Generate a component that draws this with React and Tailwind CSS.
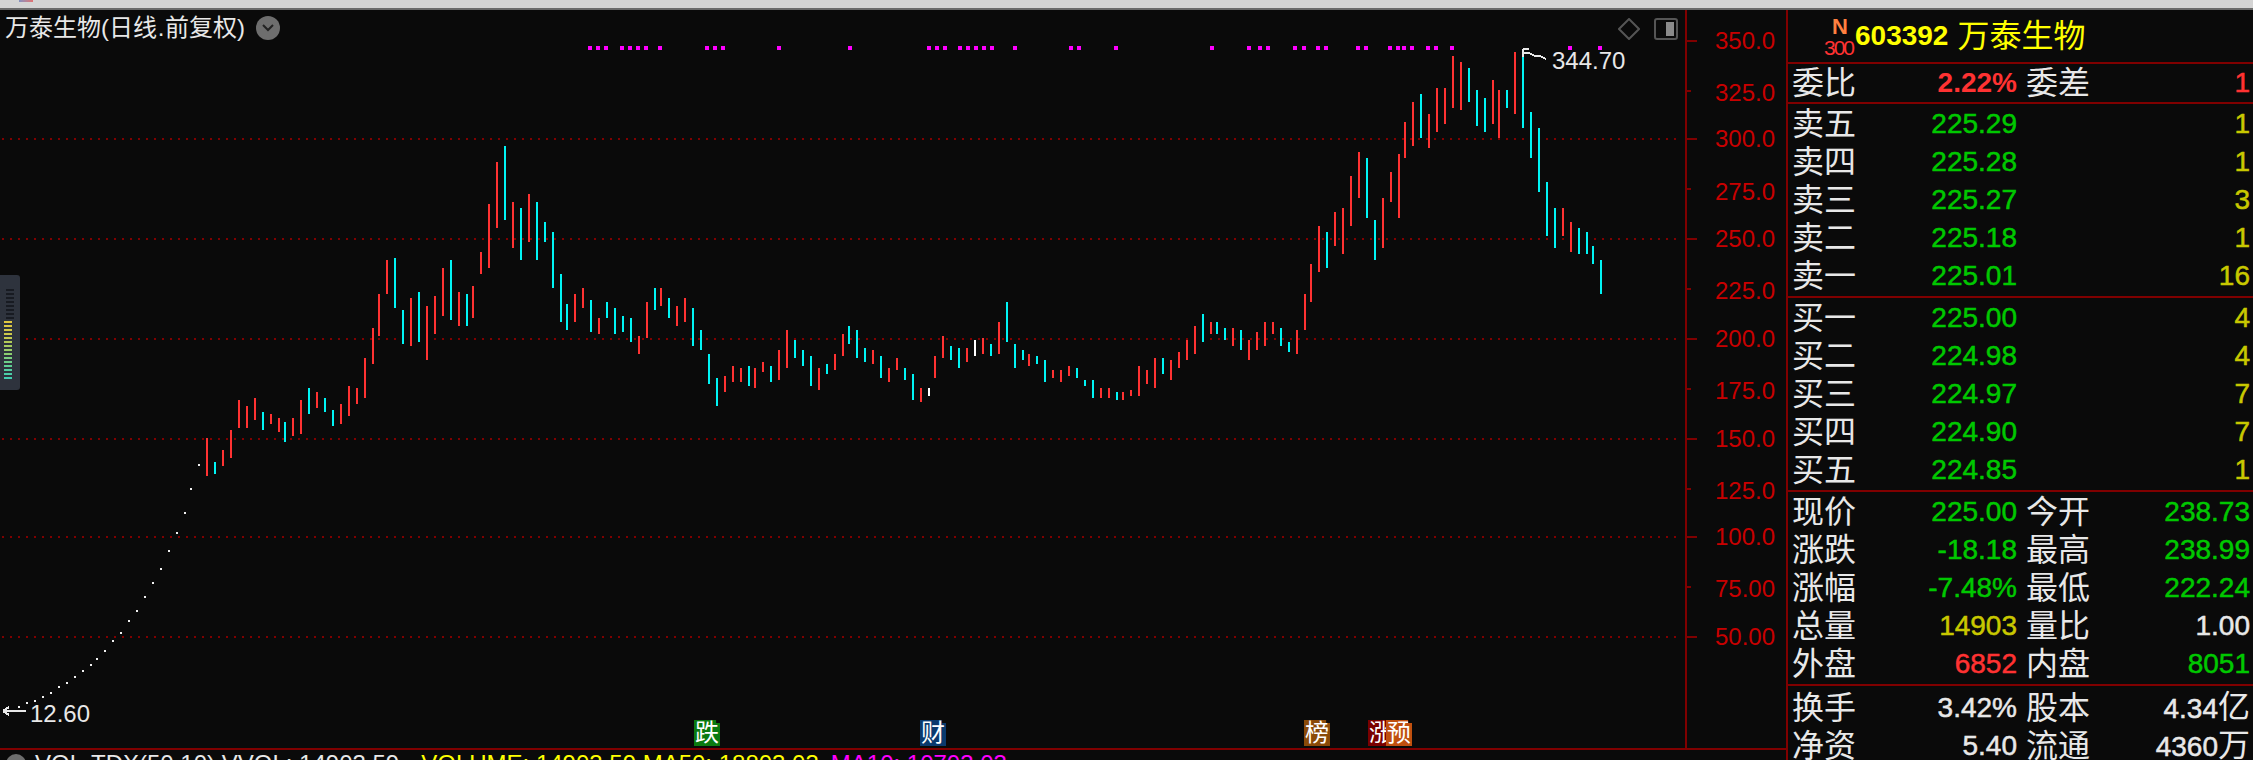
import React from "react";

const RED = "#ff3232";
const CYAN = "#00f4f4";
const WHITE = "#ffffff";
const COLORS = { r: RED, c: CYAN, w: WHITE };

// candles, read off the chart: [x, top, bottom, colour]
const BARS = [
  [207, 438, 476, "r"], [215, 462, 474, "c"], [223, 450, 466, "r"], [231, 430, 458, "r"], [239, 400, 428, "r"],
  [247, 406, 428, "r"], [255, 398, 420, "r"], [263, 412, 430, "c"], [271, 414, 424, "r"], [279, 418, 432, "r"],
  [285, 422, 442, "c"], [293, 418, 436, "r"], [301, 400, 434, "r"], [309, 388, 414, "c"], [317, 392, 408, "r"],
  [325, 398, 412, "c"], [333, 410, 426, "c"], [341, 404, 424, "r"], [349, 386, 416, "r"], [357, 388, 404, "r"],
  [365, 358, 398, "r"], [373, 328, 364, "r"], [379, 294, 336, "r"], [387, 260, 294, "r"], [395, 258, 308, "c"],
  [403, 310, 344, "c"], [411, 298, 346, "r"], [419, 292, 342, "c"], [427, 306, 360, "r"], [435, 296, 334, "r"],
  [443, 268, 316, "r"], [451, 260, 320, "c"], [459, 292, 326, "r"], [467, 294, 326, "c"], [473, 286, 318, "r"],
  [481, 252, 274, "r"], [489, 204, 268, "r"], [497, 162, 228, "r"], [505, 146, 220, "c"], [513, 202, 248, "r"],
  [521, 208, 260, "c"], [529, 194, 242, "r"], [537, 202, 260, "c"], [545, 222, 242, "c"], [553, 232, 288, "c"],
  [561, 274, 322, "c"], [567, 304, 330, "c"], [575, 294, 322, "r"], [583, 288, 308, "r"], [591, 300, 332, "c"],
  [599, 318, 334, "r"], [607, 302, 318, "c"], [615, 308, 334, "c"], [623, 316, 332, "c"], [631, 318, 342, "c"],
  [639, 336, 354, "r"], [647, 302, 338, "r"], [655, 288, 310, "c"], [661, 288, 306, "r"], [669, 298, 318, "c"],
  [677, 306, 326, "r"], [685, 298, 322, "r"], [693, 308, 346, "c"], [701, 330, 350, "c"], [709, 354, 384, "c"],
  [717, 378, 406, "c"], [725, 376, 392, "r"], [733, 366, 382, "r"], [741, 368, 382, "r"], [749, 366, 386, "c"],
  [755, 368, 388, "r"], [763, 362, 372, "r"], [771, 366, 382, "c"], [779, 350, 380, "r"], [787, 330, 368, "r"],
  [795, 340, 358, "c"], [803, 350, 366, "c"], [811, 356, 386, "c"], [819, 368, 390, "r"], [827, 364, 374, "c"],
  [835, 354, 370, "r"], [843, 334, 356, "r"], [849, 326, 344, "c"], [857, 330, 358, "c"], [865, 348, 362, "c"],
  [873, 350, 364, "r"], [881, 356, 378, "c"], [889, 368, 382, "r"], [897, 358, 370, "r"], [905, 368, 380, "c"],
  [913, 374, 400, "c"], [921, 388, 402, "r"], [929, 388, 396, "w"], [935, 356, 378, "r"], [943, 336, 358, "r"],
  [951, 346, 360, "c"], [959, 348, 368, "c"], [967, 348, 362, "r"], [975, 340, 356, "w"], [983, 338, 354, "r"],
  [991, 344, 356, "c"], [999, 322, 354, "r"], [1007, 302, 342, "c"], [1015, 344, 368, "c"], [1023, 350, 360, "c"],
  [1029, 354, 366, "r"], [1037, 356, 364, "c"], [1045, 360, 382, "c"], [1053, 370, 378, "r"], [1061, 370, 382, "r"],
  [1069, 366, 376, "r"], [1077, 368, 378, "c"], [1085, 380, 386, "c"], [1093, 380, 398, "c"], [1101, 388, 398, "r"],
  [1109, 388, 398, "r"], [1117, 392, 400, "c"], [1123, 392, 400, "r"], [1131, 390, 396, "r"], [1139, 366, 396, "r"],
  [1147, 370, 384, "r"], [1155, 358, 388, "r"], [1163, 358, 374, "c"], [1171, 360, 380, "r"], [1179, 352, 368, "r"],
  [1187, 340, 360, "r"], [1195, 326, 354, "r"], [1203, 314, 342, "c"], [1211, 322, 334, "r"], [1217, 322, 334, "c"],
  [1225, 328, 340, "c"], [1233, 328, 346, "r"], [1241, 330, 350, "c"], [1249, 340, 360, "r"], [1257, 332, 350, "r"],
  [1265, 322, 346, "r"], [1273, 322, 334, "r"], [1281, 328, 346, "c"], [1289, 342, 352, "c"], [1297, 330, 354, "r"],
  [1305, 294, 330, "r"], [1311, 264, 302, "r"], [1319, 226, 272, "r"], [1327, 232, 268, "c"], [1335, 212, 246, "r"],
  [1343, 208, 254, "r"], [1351, 176, 226, "r"], [1359, 152, 198, "r"], [1367, 158, 218, "c"], [1375, 220, 260, "c"],
  [1383, 198, 248, "r"], [1391, 172, 202, "r"], [1399, 154, 218, "r"], [1405, 122, 158, "r"], [1413, 102, 146, "r"],
  [1421, 94, 138, "c"], [1429, 114, 148, "r"], [1437, 88, 132, "r"], [1445, 88, 124, "r"], [1453, 56, 108, "r"],
  [1461, 62, 110, "r"], [1469, 68, 102, "c"], [1477, 90, 126, "c"], [1485, 98, 132, "c"], [1493, 80, 124, "r"],
  [1499, 90, 138, "r"], [1507, 90, 108, "c"], [1515, 52, 114, "r"], [1523, 56, 128, "c"], [1531, 112, 158, "c"],
  [1539, 128, 192, "c"], [1547, 182, 236, "c"], [1555, 208, 248, "c"], [1563, 208, 236, "r"], [1571, 222, 252, "r"],
  [1579, 228, 254, "c"], [1587, 232, 254, "c"], [1593, 246, 264, "c"], [1601, 260, 294, "c"],
];

// the dotted run before the first candle
const DOTS = [
  [199, 465], [191, 489], [185, 513], [177, 533], [169, 551], [161, 569], [153, 583], [145, 597],
  [137, 611], [129, 621], [121, 633], [113, 641], [105, 651], [97, 659], [91, 665], [83, 671],
  [75, 677], [67, 683], [59, 687], [51, 693], [43, 697], [35, 701], [27, 703], [19, 707],
];

const MARKS = [
  588, 596, 604, 620, 628, 636, 644, 658, 705, 713, 721, 777, 848, 927, 935, 943, 958, 966, 974, 982, 990,
  1013, 1069, 1077, 1114, 1210, 1247, 1258, 1266, 1293, 1302, 1316, 1324, 1356, 1364, 1388, 1396, 1402, 1410,
  1426, 1434, 1450, 1568, 1598,
];

const GRID = [139, 239, 339, 439, 537, 637];

// [tick y, label y, label, long tick]
const AXIS = [
  [41, 41, "350.0", 1], [91, 93, "325.0", 0], [139, 139, "300.0", 1], [189, 192, "275.0", 0], [239, 239, "250.0", 1],
  [289, 291, "225.0", 0], [339, 339, "200.0", 1], [389, 391, "175.0", 0], [439, 439, "150.0", 1], [489, 491, "125.0", 0],
  [537, 537, "100.0", 1], [587, 589, "75.00", 0], [637, 637, "50.00", 1],
];

const SELL = [
  ["卖五", "225.29", "1"],
  ["卖四", "225.28", "1"],
  ["卖三", "225.27", "3"],
  ["卖二", "225.18", "1"],
  ["卖一", "225.01", "16"],
];

const BUY = [
  ["买一", "225.00", "4"],
  ["买二", "224.98", "4"],
  ["买三", "224.97", "7"],
  ["买四", "224.90", "7"],
  ["买五", "224.85", "1"],
];

const GREEN = "text-[#00c800]";
const YELLOW = "text-[#c8c800]";
const LIGHT = "text-[#e8e8e8]";
const UP = "text-[#ff3232]";
const HEAVY = "[-webkit-text-stroke:0.5px_currentColor]";

const QUOTE = [
  ["现价", "225.00", GREEN, "今开", "238.73", GREEN],
  ["涨跌", "-18.18", GREEN, "最高", "238.99", GREEN],
  ["涨幅", "-7.48%", GREEN, "最低", "222.24", GREEN],
  ["总量", "14903", YELLOW, "量比", "1.00", LIGHT],
  ["外盘", "6852", UP, "内盘", "8051", GREEN],
];

const Row = ({ label, value, valueColor, label2, value2, value2Color }) => (
  <div className="grid grid-cols-[64px_161px_73px_160px] h-[38px] pl-1 items-center leading-[38px]">
    <span className={`text-[32px] ${LIGHT}`}>{label}</span>
    <span className={`text-[28px] text-right ${HEAVY} ${valueColor}`}>{value}</span>
    <span className={`text-[32px] pl-[9px] ${LIGHT}`}>{label2}</span>
    <span className={`text-[28px] text-right ${HEAVY} ${value2Color}`}>{value2}</span>
  </div>
);

const Badge = ({ text, className }) => (
  <div
    className={`absolute top-[710px] w-[26px] h-[26px] flex items-center justify-center text-[24px] leading-none text-white [clip-path:polygon(0_0,85%_0,85%_12%,100%_12%,100%_100%,0_100%)] ${className}`}
  >
    {text}
  </div>
);

const Half = ({ children }) => <span className="inline-block w-2 text-center">{children}</span>;

const ChartSvg = () => (
  <svg className="absolute inset-0" width="1786" height="738" viewBox="0 10 1786 738" shapeRendering="crispEdges">
    {GRID.map((y) => (
      <line key={y} x1="2" x2="1680" y1={y} y2={y} stroke="#800000" strokeWidth="2" strokeDasharray="2 6" />
    ))}
    {BARS.map(([x, top, bottom, c]) => (
      <rect key={x} x={x - 1} y={top} width="2" height={bottom - top} fill={COLORS[c]} />
    ))}
    {DOTS.map(([x, y]) => (
      <rect key={x} x={x - 1} y={y - 1} width="2" height="2" fill="#f0f0f0" />
    ))}
    {MARKS.map((x) => (
      <rect key={x} x={x} y="46" width="4" height="4" fill="#ff00ff" />
    ))}

    {/* axis and ticks */}
    <rect x="1685" y="10" width="2" height="738" fill="#800000" />
    {AXIS.map(([y, , , long]) => (
      <rect key={y} x="1687" y={y - 1} width={long ? 10 : 4} height="2" fill="#800000" />
    ))}

    {/* high and low pointers */}
    <g fill="none" stroke="#e8e8e8" strokeWidth="2">
      <path d="M1523 49h6M1523 49v8M1523 53h6l6 3h5l6 3" />
      <path d="M3 711h23M3 711l6-4M3 711l6 4" />
    </g>
  </svg>
);

const App = () => {
  return (
    <div className="w-[2253px] h-[760px] overflow-hidden flex flex-col bg-[#0a0a0a] font-['Liberation_Sans','Noto_Sans_CJK_SC',sans-serif]">
      <div className="h-[10px] shrink-0 bg-[#d4d4d4] border-b-2 border-[#6b6b6b]">
        <div className="ml-[19px] w-[14px] h-[2px] bg-linear-to-r from-[#8090c0] to-[#e07070]" />
      </div>

      <div className="flex flex-1 min-h-0">
        {/* chart side */}
        <div className="w-[1786px] shrink-0 flex flex-col">
          <div className="relative h-[740px] shrink-0 border-b-2 border-[#800000]">
            <ChartSvg />

            <div className={`absolute left-[5px] top-[4px] flex items-center text-[24px] leading-[28px] ${LIGHT}`}>
              <span>万泰生物</span>
              <Half>(</Half>
              <span>日线</span>
              <Half>.</Half>
              <span>前复权</span>
              <Half>)</Half>
            </div>
            <div className="absolute left-[256px] top-[6px] w-6 h-6 rounded-full bg-[#6e6e6e] flex items-center justify-center">
              <svg width="12" height="8" viewBox="0 0 12 8" fill="none" stroke="#222" strokeWidth="2">
                <path d="M1 1l5 5 5-5" />
              </svg>
            </div>

            <svg className="absolute left-[1618px] top-[8px]" width="22" height="22" viewBox="0 0 22 22" fill="none" stroke="#555" strokeWidth="2">
              <path d="M11 1l10 10-10 10L1 11z" />
            </svg>
            <div className="absolute left-[1654px] top-[8px] w-6 h-[22px] rounded-[3px] border-2 border-[#555] flex justify-end p-[2px]">
              <div className="w-2 bg-[#8a8a8a]" />
            </div>

            <div className={`absolute left-[1552px] top-[37px] text-[24px] leading-[28px] ${LIGHT}`}>344.70</div>
            <div className={`absolute left-[30px] top-[690px] text-[24px] leading-[28px] ${LIGHT}`}>12.60</div>

            {AXIS.map(([y, labelY, text]) => (
              <div
                key={y}
                className="absolute right-[11px] -translate-y-1/2 text-[24px] leading-none text-[#c80000]"
                style={{ top: labelY - 10 }}
              >
                {text}
              </div>
            ))}

            <Badge text="跌" className="left-[694px] bg-[#0a7a10]" />
            <Badge text="财" className="left-[920px] bg-[#0a3a6e]" />
            <Badge text="榜" className="left-[1304px] bg-[#8a4a08]" />
            <Badge text="涨" className="left-[1368px] bg-[#7a0000]" />
            <Badge text="预" className="left-[1386px] bg-[#c0500f]" />

            {/* floating volume tab on the left edge */}
            <div className="absolute left-0 top-[265px] w-5 h-[115px] rounded-r-[3px] bg-[#2e333d] flex flex-col pt-[14px]">
              <div className="flex flex-col gap-[2px] pl-[6px]">
                {[0, 1, 2, 3, 4, 5, 6, 7].map((i) => (
                  <div key={i} className="w-2 h-[2px] bg-[#181b22]" />
                ))}
              </div>
              <div className="flex flex-col gap-[2px] pl-1 mt-[2px]">
                <div className="w-2 h-[2px] bg-[#e0c840]" />
                <div className="w-2 h-[2px] bg-[#dcc844]" />
                <div className="w-2 h-[2px] bg-[#d4ca48]" />
                <div className="w-2 h-[2px] bg-[#ccca4c]" />
                <div className="w-2 h-[2px] bg-[#c4cc50]" />
                <div className="w-2 h-[2px] bg-[#b4cc58]" />
                <div className="w-2 h-[2px] bg-[#a8cc60]" />
                <div className="w-2 h-[2px] bg-[#9cce68]" />
                <div className="w-2 h-[2px] bg-[#8cce70]" />
                <div className="w-2 h-[2px] bg-[#7cd080]" />
                <div className="w-2 h-[2px] bg-[#6cd088]" />
                <div className="w-2 h-[2px] bg-[#60d094]" />
                <div className="w-2 h-[2px] bg-[#54d0a0]" />
                <div className="w-2 h-[2px] bg-[#4cd0a8]" />
                <div className="w-2 h-[2px] bg-[#44d0b0]" />
              </div>
            </div>
          </div>

          {/* indicator line, cut off by the window */}
          <div className="relative h-[10px] overflow-hidden flex text-[24px] leading-[28px] whitespace-nowrap">
            <div className="absolute left-[6px] top-[4px] w-5 h-5 rounded-full bg-[#6e6e6e]" />
            <span className={`ml-[35px] ${LIGHT}`}>VOL-TDX(50,10) VVOL: 14903.59</span>
            <span className="ml-[22px] text-[#ffff00]">VOLUME: 14903.59 MA50: 18803.03</span>
            <span className="ml-[12px] text-[#ff00ff]">MA10: 10703.03</span>
          </div>
        </div>

        {/* quote panel */}
        <div className="w-[467px] shrink-0 border-l-2 border-[#800000] flex flex-col">
          <div className="h-[52px] shrink-0 border-b-2 border-[#800000] box-content flex items-center">
            <div className="relative w-[67px] h-[52px] shrink-0">
              <span className="absolute left-[44px] top-[6px] text-[22px] leading-[22px] font-bold text-[#ff8040]">N</span>
              <span className="absolute left-[36px] top-[28px] text-[21px] leading-[20px] tracking-[-2px] text-[#ff3232]">300</span>
            </div>
            <span className="text-[28px] font-bold text-[#ffff00]">603392</span>
            <span className="ml-[9px] text-[32px] text-[#ffff00]">万泰生物</span>
          </div>

          <div className="h-[38px] shrink-0 border-b-2 border-[#800000] box-content grid grid-cols-[64px_161px_73px_160px] pl-1 items-center leading-[38px]">
            <span className={`text-[32px] ${LIGHT}`}>委比</span>
            <span className="text-[28px] font-bold text-right text-[#ff3232]">2.22%</span>
            <span className={`text-[32px] pl-[9px] ${LIGHT}`}>委差</span>
            <span className={`text-[28px] text-right ${HEAVY} text-[#ff3232]`}>1</span>
          </div>

          <div className="py-px border-b-2 border-[#800000]">
            {SELL.map(([l, v, q]) => (
              <Row key={l} label={l} value={v} valueColor={GREEN} value2={q} value2Color={YELLOW} />
            ))}
          </div>

          <div className="py-px border-b-2 border-[#800000]">
            {BUY.map(([l, v, q]) => (
              <Row key={l} label={l} value={v} valueColor={GREEN} value2={q} value2Color={YELLOW} />
            ))}
          </div>

          <div className="py-px border-b-2 border-[#800000]">
            {QUOTE.map(([l, v, c, l2, v2, c2]) => (
              <Row key={l} label={l} value={v} valueColor={c} label2={l2} value2={v2} value2Color={c2} />
            ))}
          </div>

          <div className="pt-[2px]">
            <Row
              label="换手"
              value="3.42%"
              valueColor={LIGHT}
              label2="股本"
              value2={<>4.34<span className="text-[32px] [-webkit-text-stroke:0]">亿</span></>}
              value2Color={LIGHT}
            />
            <Row
              label="净资"
              value="5.40"
              valueColor={LIGHT}
              label2="流通"
              value2={<>4360<span className="text-[32px] [-webkit-text-stroke:0]">万</span></>}
              value2Color={LIGHT}
            />
          </div>
        </div>
      </div>
    </div>
  );
};

export default App;
